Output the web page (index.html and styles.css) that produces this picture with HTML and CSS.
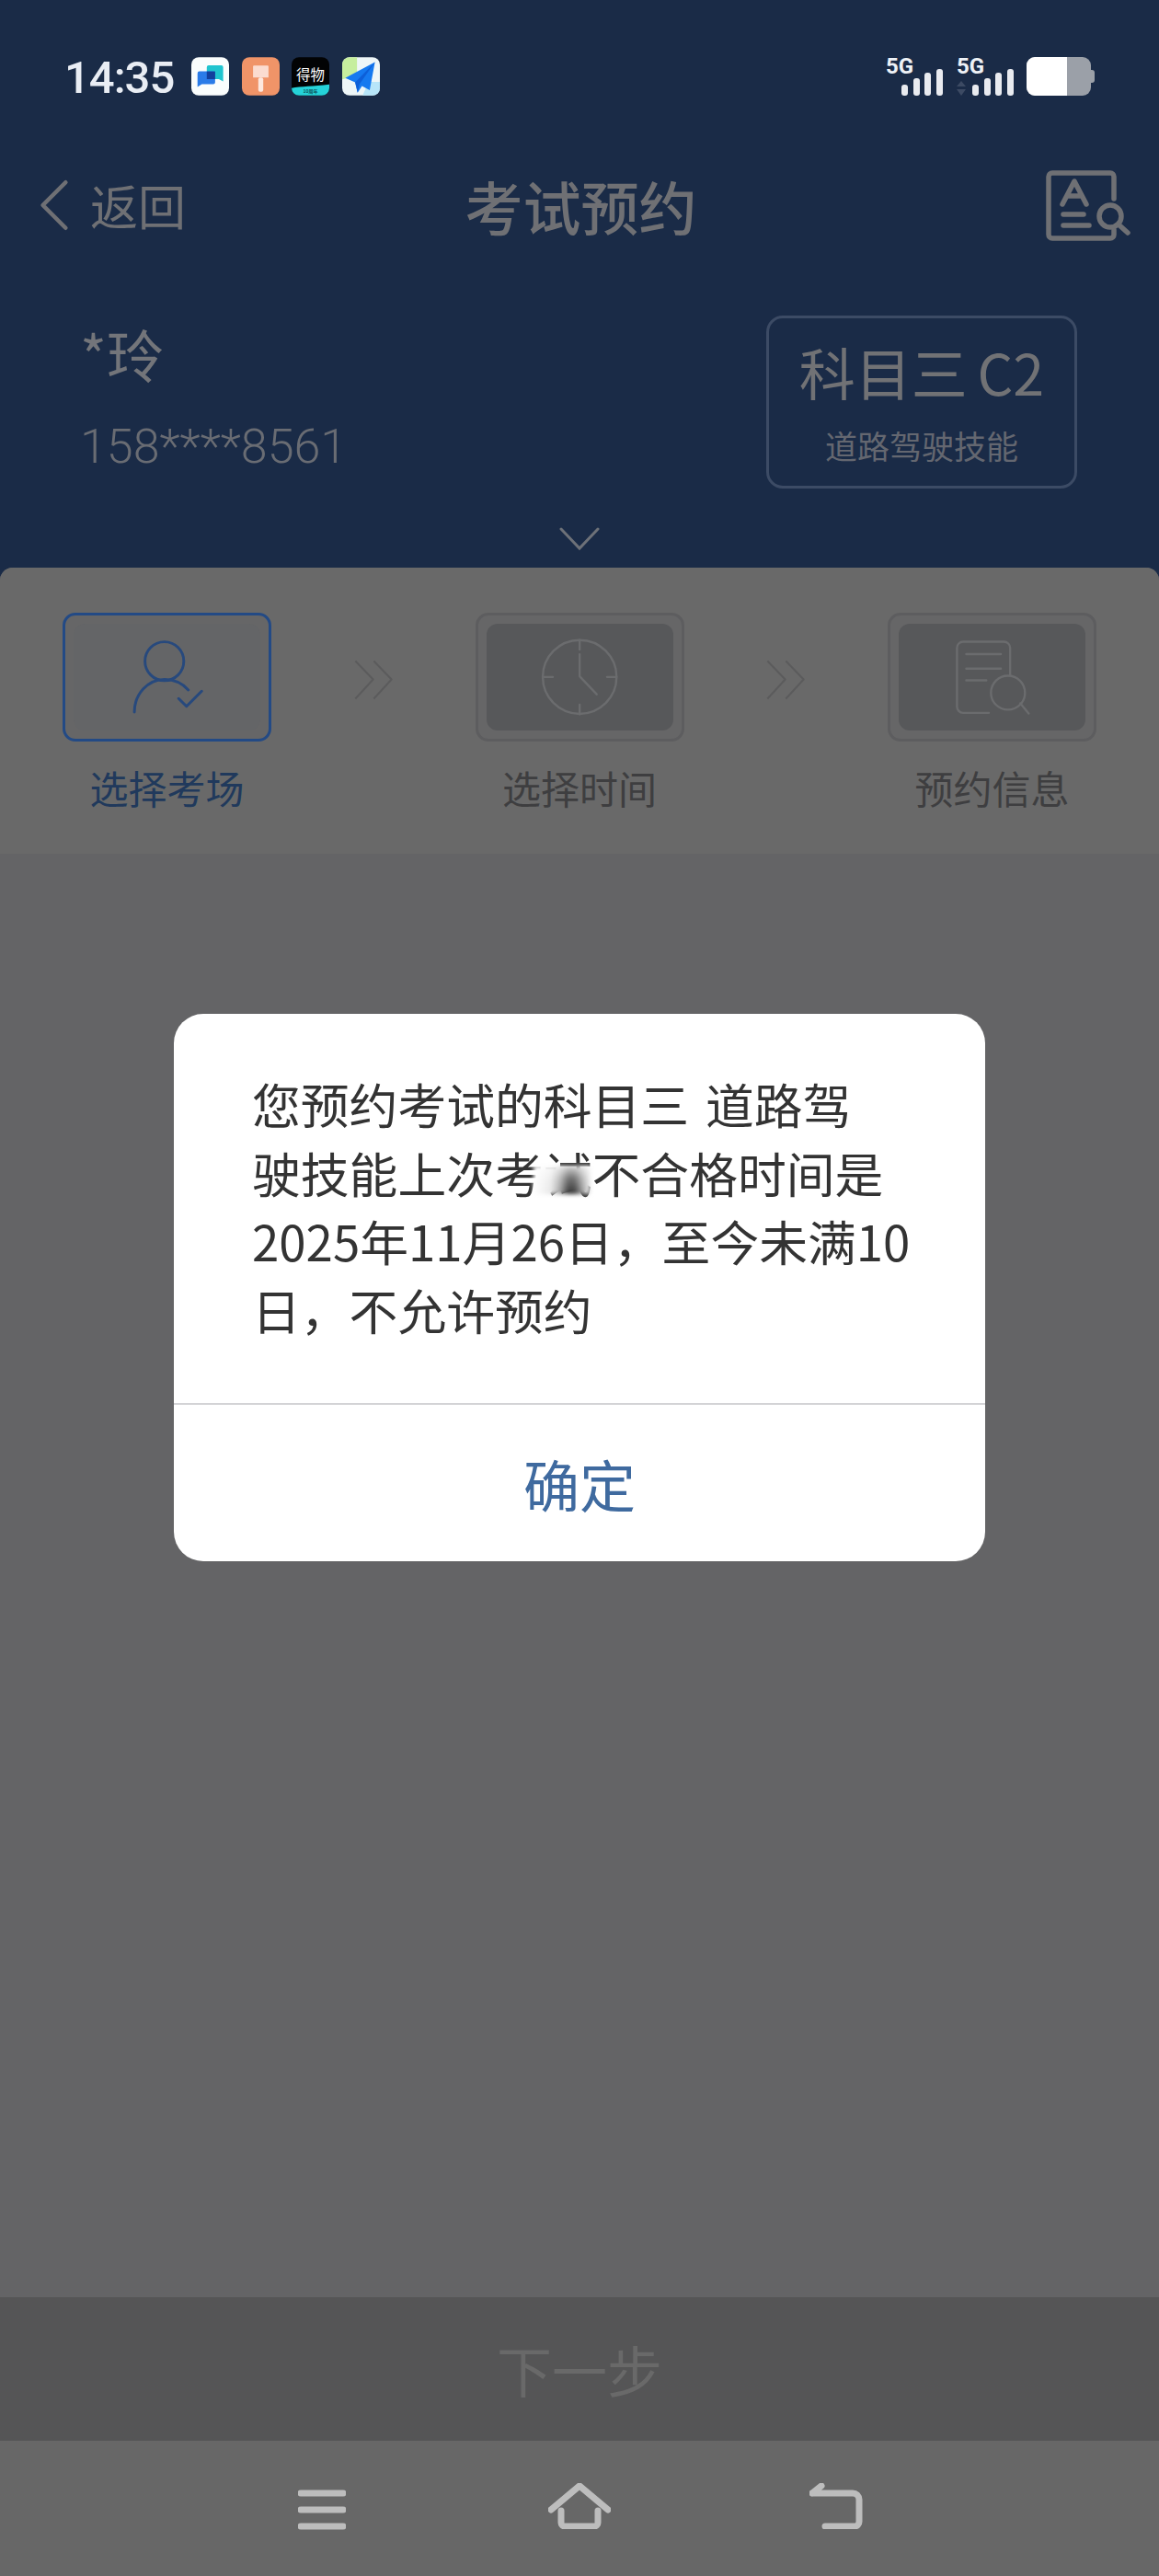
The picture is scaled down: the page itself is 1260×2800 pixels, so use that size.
FILE: index.html
```html
<!DOCTYPE html>
<html lang="zh-CN">
<head>
<meta charset="utf-8">
<title>考试预约</title>
<link rel="stylesheet" href="styles.css">
</head>
<body>
<div class="screen">
  <div class="status">
    <span class="time">14:35</span>
    <div class="apps">
      <svg class="app" viewBox="0 0 122 124"><rect width="122" height="124" rx="24" fill="#fafdfd"/><path d="M50 32a6 6 0 0 1 6-6h41a6 6 0 0 1 6 6v46l-14-7H56a6 6 0 0 1-6-6z" fill="#1fc4cf"/><path d="M20 52a6 6 0 0 1 6-6h45a6 6 0 0 1 6 6v29a6 6 0 0 1-6 6H34l-14 9z" fill="#2a7be8"/><rect x="50" y="46" width="27" height="25" fill="#123f9c"/></svg>
      <svg class="app" viewBox="0 0 122 124"><rect width="122" height="124" rx="24" fill="#f09468"/><path d="M36 30a3 3 0 0 1 3-3h44a3 3 0 0 1 3 3v36H36z" fill="#fbdcd0"/><rect x="53" y="66" width="16" height="46" rx="6" fill="#fde8df"/></svg>
      <svg class="app" viewBox="0 0 122 124"><rect width="122" height="124" rx="24" fill="#020304"/><path d="M0 100c30-6 70-6 122-12v12a24 24 0 0 1-24 24H24A24 24 0 0 1 0 100z" fill="#25d3d9"/><text class="app-title" x="61" y="74" text-anchor="middle">得物</text><text class="app-sub" x="61" y="117" text-anchor="middle">10周年</text></svg>
      <svg class="app" viewBox="0 0 122 124"><rect width="122" height="124" rx="24" fill="#eef6f8"/><path d="M24 0h24v60L0 72V24A24 24 0 0 1 24 0z" fill="#c6ee9e"/><path d="M122 80v20a24 24 0 0 1-24 24H66l20-44z" fill="#b7e5f9"/><path d="M106 16 10 67l32 14 8 34 14-22 25 14z" fill="#1579f0"/><path d="M106 16 42 81l8 34 6-28z" fill="#0d5fd8"/></svg>
    </div>
    <svg class="signals" viewBox="960 50 230 54">
      <text class="net" x="963" y="80">5G</text>
      <g class="bars"><rect x="980" y="92" width="7" height="12" rx="3"/><rect x="993" y="85" width="7" height="19" rx="3"/><rect x="1005" y="79" width="7" height="25" rx="3"/><rect x="1018" y="75" width="7" height="29" rx="3"/></g>
      <text class="net" x="1040" y="80">5G</text>
      <path d="M1045 88l5 6h-10zM1045 104l5-7h-10z" fill="#3c4a63"/>
      <g class="bars"><rect x="1057" y="92" width="7" height="12" rx="3"/><rect x="1070" y="85" width="7" height="19" rx="3"/><rect x="1082" y="79" width="7" height="25" rx="3"/><rect x="1095" y="75" width="7" height="29" rx="3"/></g>
      <rect x="1116" y="62" width="70" height="42" rx="9" fill="#9ba0a8"/>
      <path d="M1125 62h35v42h-35a9 9 0 0 1-9-9V71a9 9 0 0 1 9-9z" fill="#fff"/>
      <path d="M1186 76h1a3 3 0 0 1 3 3v8a3 3 0 0 1-3 3h-1z" fill="#9ba0a8"/>
    </svg>
  </div>

  <header class="topbar">
    <div class="back">
      <svg class="back-icon" viewBox="0 0 36 60"><path d="M32 3 5 30l27 27"/></svg>
      <span>返回</span>
    </div>
    <h1 class="title">考试预约</h1>
    <svg class="doc-icon" viewBox="1135 182 95 82">
      <path d="M1211 216V192a4 4 0 0 0-4-4h-63a4 4 0 0 0-4 4v63a4 4 0 0 0 4 4h63a4 4 0 0 0 4-4v-5"/>
      <path d="M1155 222l13-25 13 25M1160 213h16M1156 233h22M1156 245h28"/>
      <circle cx="1207" cy="235" r="12"/>
      <path d="M1216 244l10 9"/>
    </svg>
  </header>

  <section class="user">
    <div class="user-info">
      <div class="name">*玲</div>
      <div class="phone">158****8561</div>
    </div>
    <div class="subject">
      <div class="subject-main">科目三 C2</div>
      <div class="subject-sub">道路驾驶技能</div>
    </div>
  </section>

  <div class="expand">
    <svg class="expand-icon" viewBox="0 0 44 26"><path d="M2 2l20 21L42 2"/></svg>
  </div>

  <main class="panel">
    <div class="steps">
      <div class="step step-active">
        <div class="step-box">
          <div class="step-inner">
            <svg class="step-icon" viewBox="300 160 250 255"><circle cx="415" cy="235" r="64"/><path d="M316 403c0-60 45-108 100-108 30 0 58 12 78 35M462 358l26 26 50-50"/></svg>
          </div>
        </div>
        <div class="step-label">选择考场</div>
      </div>
      <svg class="arrows" viewBox="1030 225 132 137"><path d="M1037 232l58 60-58 63M1097 232l58 60-58 63"/></svg>
      <div class="step">
        <div class="step-box">
          <div class="step-inner">
            <svg class="step-icon" viewBox="295 165 245 245"><circle cx="418" cy="287" r="117"/><path d="M418 215v70l54 57M418 170v30M418 375v30M303 287h30M505 287h30"/></svg>
          </div>
        </div>
        <div class="step-label">选择时间</div>
      </div>
      <svg class="arrows" viewBox="1030 225 132 137"><path d="M1037 232l58 60-58 63M1097 232l58 60-58 63"/></svg>
      <div class="step">
        <div class="step-box">
          <div class="step-inner">
            <svg class="step-icon" viewBox="710 165 250 245"><path d="M823 403h-83a20 20 0 0 1-20-20V193a20 20 0 0 1 20-20h132a20 20 0 0 1 20 20v87M750 213h112M750 260h112M750 298h65M925 372l27 33"/><circle cx="885" cy="338" r="55"/></svg>
          </div>
        </div>
        <div class="step-label">预约信息</div>
      </div>
    </div>
    <div class="panel-body"></div>
    <div class="next">下一步</div>
  </main>

  <nav class="navbar">
    <svg class="nav-menu" viewBox="0 0 52 46"><path d="M3 6h46M3 24h46M3 42h46"/></svg>
    <svg class="nav-home" viewBox="0 0 68 50"><path d="M3 29 34 3l31 26"/><path d="M14 30v13a4 4 0 0 0 4 4h32a4 4 0 0 0 4-4V30"/></svg>
    <svg class="nav-back" viewBox="0 0 58 50"><path d="M3 11h44a7 7 0 0 1 7 7v24a5 5 0 0 1-5 5H17M3 11l10-8"/></svg>
  </nav>

  <div class="dialog">
    <div class="dialog-text">您预约考试的科目三 道路驾<br>驶技能上次考试不合格时间是<br>2025年11月26日，至今未满10<br>日，不允许预约</div>
    <div class="dialog-action">确定</div>
    <span class="smudge"></span>
  </div>
</div>
</body>
</html>
```
FILE: styles.css
```css
* { box-sizing: border-box; }
html, body { margin: 0; padding: 0; }
body { background: #1a2b47; font-family: "Noto Sans CJK SC", "Noto Sans", sans-serif; }
svg { display: block; }

.screen { position: relative; width: 1260px; height: 2800px; display: flex; flex-direction: column; background: #1a2b47; overflow: hidden; }

/* status bar */
.status { display: flex; align-items: flex-end; height: 54px; margin-top: 50px; padding-left: 70px; }
.time { width: 138px; margin-bottom: -2px; font-family: "Roboto", sans-serif; font-weight: 500; font-size: 49px; letter-spacing: -1px; line-height: 42px; color: #e9edf4; }
.apps { display: flex; gap: 13.5px; }
.app { width: 41px; height: 42px; }
.app-title { font-family: "Noto Sans CJK SC", sans-serif; font-size: 46px; fill: #fff; }
.app-sub { font-family: "Noto Sans CJK SC", sans-serif; font-size: 15px; font-weight: 700; fill: #0b4e55; }
.signals { width: 230px; height: 54px; margin-left: auto; margin-right: 70px; }
.net { font-family: "Roboto", sans-serif; font-weight: 700; font-size: 24px; fill: #eef1f6; }
.bars rect { fill: #e9ebf0; }

/* top bar */
.topbar { display: grid; grid-template-columns: 1fr auto 1fr; align-items: center; height: 82px; margin-top: 78px; padding: 0 30px 0 33px; color: #6f7074; }
.back { display: flex; align-items: center; gap: 23px; margin-left: 9px; font-size: 52px; line-height: 74px; height: 82px; }
.back-icon { width: 33px; height: 58px; fill: none; stroke: #6f7074; stroke-width: 5; stroke-linecap: round; stroke-linejoin: round; }
.title { margin: 0; font-size: 63px; font-weight: 500; line-height: 82px; color: #6f7074; }
.doc-icon { justify-self: end; width: 95px; height: 82px; fill: none; stroke: #6f7074; stroke-width: 5.5; stroke-linecap: round; stroke-linejoin: round; }

/* user */
.user { display: flex; justify-content: space-between; margin-top: 79px; padding: 0 89px 0 87px; }
.name { font-size: 62px; line-height: 74px; margin-top: 4px; color: #73757a; }
.phone { font-family: "Roboto", sans-serif; font-weight: 300; font-size: 52px; line-height: 60px; margin-top: 35px; color: #696c73; }
.subject { display: flex; flex-direction: column; align-items: center; width: 338px; height: 188px; border: 3px solid #3c4b65; border-radius: 18px; }
.subject-main { margin-top: 14px; font-size: 61px; word-spacing: -3px; line-height: 88px; color: #717275; }
.subject-sub { margin-top: 10px; font-size: 35px; line-height: 52px; color: #646770; }

.expand { display: flex; justify-content: center; height: 86px; padding-top: 42px; }
.expand-icon { width: 44px; height: 26px; fill: none; stroke: #6d7178; stroke-width: 3; stroke-linecap: round; }

/* panel */
.panel { flex: 1; display: flex; flex-direction: column; background: #656567; border-radius: 14px 14px 0 0; overflow: hidden; }
.steps { display: flex; justify-content: space-between; height: 311px; padding: 49px 68px 0; background: #696969; }
.step { width: 227px; display: flex; flex-direction: column; align-items: center; }
.step-box { width: 227px; height: 140px; padding: 9px; border: 3px solid #5d5d5f; border-radius: 14px; background: #666667; }
.step-inner { display: flex; align-items: center; justify-content: center; height: 116px; border-radius: 12px; background: #57585a; }
.step-icon { width: 84px; height: 84px; fill: none; stroke: #6b6c6e; stroke-width: 7; stroke-linecap: round; stroke-linejoin: round; }
.step-label { margin-top: 22px; font-size: 42px; line-height: 56px; color: #3e3e40; }
.step-active .step-box { border-color: #234a85; }
.step-active .step-inner { background: #646567; }
.step-active .step-icon { stroke: #27497d; stroke-width: 9; }
.step-active .step-label { color: #20395c; }
.arrows { width: 44px; height: 46px; margin-top: 50px; fill: none; stroke: #5b5b5c; stroke-width: 6; stroke-linejoin: round; }
.panel-body { flex: 1; background: #646466; }
.next { height: 156px; background: #555556; color: #696969; font-size: 60px; line-height: 156px; text-align: center; }

/* navbar */
.navbar { flex: none; display: flex; align-items: flex-start; height: 147px; padding: 46px 0 0 324px; background: #676767; }
.navbar svg { fill: none; stroke: #bdbdbd; stroke-width: 7; stroke-linecap: round; stroke-linejoin: round; }
.nav-menu { width: 52px; height: 46px; margin-top: 5px; }
.nav-home { width: 68px; height: 50px; margin-left: 220px; }
.nav-back { width: 58px; height: 50px; margin-left: 216px; }

/* dialog */
.dialog { position: absolute; top: 1102px; left: 189px; width: 882px; height: 595px; display: flex; flex-direction: column; background: #fff; border-radius: 32px; overflow: hidden; }
.dialog-text { height: 425px; padding: 60px 0 0 85px; font-size: 52.8px; word-spacing: 6px; line-height: 74.5px; color: #333; white-space: nowrap; border-bottom: 2px solid #d3d3d6; }
.dialog-action { flex: 1; display: flex; align-items: center; justify-content: center; font-size: 61px; color: #3f6a9f; }
.smudge { position: absolute; left: 391px; top: 165px; width: 62px; height: 31px; background: linear-gradient(180deg, rgba(255,255,255,.8) 0%, rgba(255,255,255,.3) 45%, rgba(255,255,255,0) 100%), linear-gradient(90deg, #fff 0%, #e8e8e8 30%, #aaa 45%, #333 62%, #3a3a3a 72%, #aaa 88%, #eee 100%); filter: blur(2px); }
```
